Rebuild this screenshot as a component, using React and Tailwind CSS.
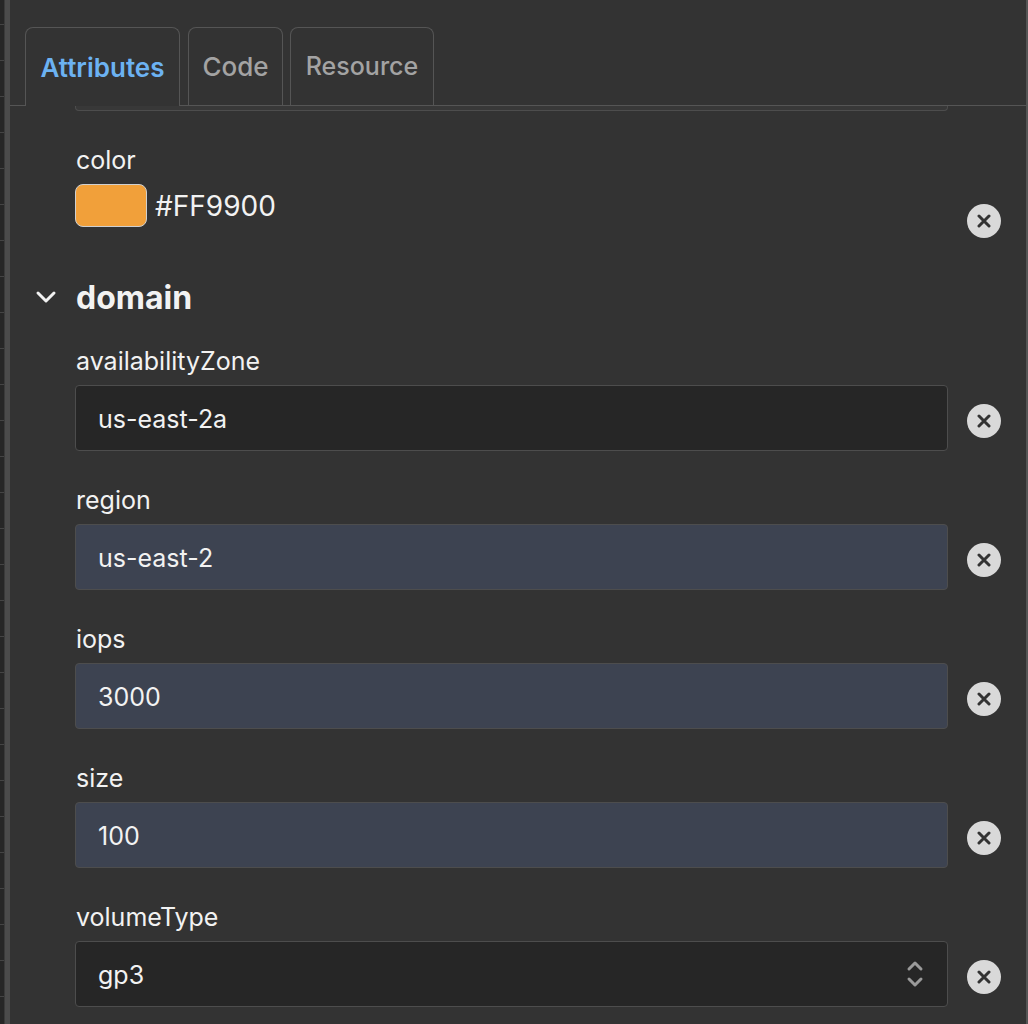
import React from "react";

const font = { fontFamily: "Inter, 'Noto Sans', sans-serif" };

function ClearButton({ className = "" }) {
  return (
    <button
      type="button"
      className={`flex h-[34px] w-[34px] shrink-0 items-center justify-center rounded-full bg-[#d9d9d9] ${className}`}
      aria-label="Clear"
    >
      <svg width="14" height="14" viewBox="0 0 14 14" aria-hidden="true">
        <path d="M2 2L12 12M12 2L2 12" stroke="#333333" strokeWidth="3" strokeLinecap="round" />
      </svg>
    </button>
  );
}

function Field({ label, value, tone = "dark", select = false }) {
  const bg = tone === "blue" ? "bg-[#3d4351]" : "bg-[#262626]";
  return (
    <div className="mt-[33px]">
      <div className="mb-[10px] h-[30px] pl-px pt-px text-[25px] leading-[30px] text-[#f2f2f2]">{label}</div>
      <div className="flex items-center gap-[19px]">
        <div
          className={`flex h-[66px] flex-1 items-center justify-between rounded-[4px] border border-[#4d4d4d] ${bg} pl-[22px] pr-[22px]`}
        >
          <span className="pt-[3px] text-[25px] text-[#f2f2f2]">{value}</span>
          {select ? (
            <svg width="20" height="32" viewBox="0 0 20 32" aria-hidden="true">
              <path d="M4 11L10 5L16 11" fill="none" stroke="#9a9a9a" strokeWidth="3" strokeLinecap="round" strokeLinejoin="round" />
              <path d="M4 21L10 27L16 21" fill="none" stroke="#9a9a9a" strokeWidth="3" strokeLinecap="round" strokeLinejoin="round" />
            </svg>
          ) : null}
        </div>
        <ClearButton className="mt-[6px]" />
      </div>
    </div>
  );
}

export default function App() {
  return (
    <div className="flex h-[1024px] w-[1028px] overflow-hidden bg-[#333333]" style={font}>
      <div className="flex h-full w-[10px] shrink-0">
        <div className="h-full w-[4px] bg-[repeating-linear-gradient(to_bottom,#262626_0px,#262626_24px,#444444_24px,#444444_25px,#262626_25px,#262626_36px)]" />
        <div className="h-full w-px bg-[#3a3a3a]" />
        <div className="h-full w-[5px] bg-[#4b4b4b]" />
      </div>

      <div className="flex flex-1 flex-col border-r-2 border-[#555555]">
        <div className="flex h-[106px] items-end gap-[8px] border-b border-[#555555] pl-[15px]">
          <div className="-mb-px flex h-[79px] w-[155px] items-center justify-center rounded-t-[8px] border border-b-0 border-[#555555] bg-[#333333] text-[26px] font-semibold text-[#6cb2f2]">
            Attributes
          </div>
          <div className="flex h-[78px] w-[95px] items-center justify-center rounded-t-[8px] border border-b-0 border-[#555555] text-[26px] font-medium text-[#a3a3a3]">
            Code
          </div>
          <div className="-ml-px flex h-[78px] w-[144px] items-center justify-center rounded-t-[8px] border border-b-0 border-[#555555] text-[25px] font-medium text-[#a3a3a3]">
            Resource
          </div>
        </div>

        <div className="pl-[65px] pr-[25px]">
          <div className="mr-[53px] h-[5px] rounded-b-[4px] border border-t-0 border-[#4d4d4d] bg-[#383838]" />

          <div className="mt-[33px]">
            <div className="mb-[10px] h-[30px] pl-px pt-px text-[25px] leading-[30px] text-[#f2f2f2]">color</div>
            <div className="flex h-[66px] items-start gap-[19px]">
              <div className="flex flex-1 items-center gap-[8px]">
                <div className="h-[43px] w-[72px] rounded-[8px] border border-[#d0d0d0] bg-[#f1a03a]" />
                <span className="text-[28px] text-[#f2f2f2]">#FF9900</span>
              </div>
              <ClearButton className="mt-[20px]" />
            </div>
          </div>

          <div className="relative mt-[27px] flex h-[40px] items-center">
            <svg
              className="absolute left-[-40px] top-[13px]"
              width="22"
              height="14"
              viewBox="0 0 22 14"
              aria-hidden="true"
            >
              <path d="M3 3L11 11L19 3" fill="none" stroke="#f2f2f2" strokeWidth="3" strokeLinecap="round" strokeLinejoin="round" />
            </svg>
            <span className="pl-px pt-[2px] text-[32px] font-bold text-[#f2f2f2]">domain</span>
          </div>

          <div className="-mt-[5px]">
            <Field label="availabilityZone" value="us-east-2a" />
            <Field label="region" value="us-east-2" tone="blue" />
            <Field label="iops" value="3000" tone="blue" />
            <Field label="size" value="100" tone="blue" />
            <Field label="volumeType" value="gp3" select />
          </div>
        </div>
      </div>
    </div>
  );
}
